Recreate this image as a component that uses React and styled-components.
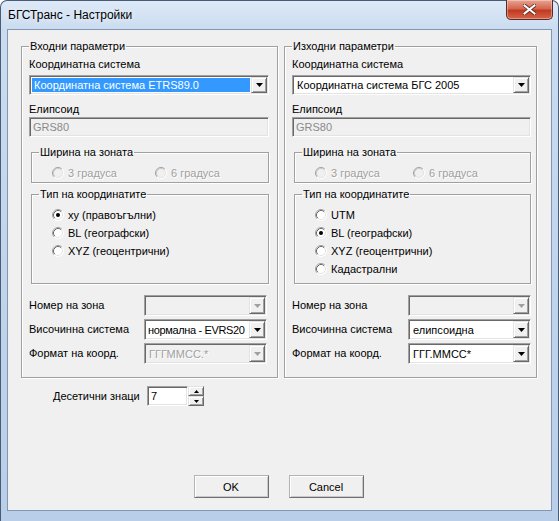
import React from "react";
import styled, { createGlobalStyle } from "styled-components";

const GlobalStyle = createGlobalStyle`
  body {
    margin: 0;
    background: #ffffff;
    font-family: "Liberation Sans", Arial, sans-serif;
  }
`;

// window frame
const Window = styled.div`
  width: 559px;
  height: 521px;
  box-sizing: border-box;
  border: 1px solid #4a5c73;
  border-bottom: none;
  border-radius: 7px 7px 0 0;
  background: linear-gradient(to bottom, #dde9f7 0, #cbdcf0 28px, #bfd3eb 60%, #b9cee8 100%);
  padding: 0 6px 10px 6px;
  display: flex;
  flex-direction: column;
`;

const TitleBar = styled.div`
  height: 28px;
  display: flex;
  align-items: flex-start;
  justify-content: space-between;
`;

const Title = styled.div`
  font-size: 12px;
  color: #000;
  margin: 7px 0 0 1px;
  text-shadow: 0 0 6px rgba(255, 255, 255, 0.9);
`;

const CloseButton = styled.div`
  width: 47px;
  height: 20px;
  margin: -1px -1px 0 0;
  box-sizing: border-box;
  border: 1px solid #5b2a24;
  border-top: none;
  border-radius: 0 0 5px 5px;
  background: linear-gradient(to bottom, #e8a493 0, #d5664f 45%, #c03a21 55%, #d6644a 100%);
  box-shadow: inset 0 0 0 1px rgba(255, 255, 255, 0.35);
  display: flex;
  align-items: center;
  justify-content: center;
`;

const Client = styled.div`
  flex: 1;
  background: #f0f0f0;
  border: 1px solid #8197b3;
  display: flex;
  flex-direction: column;
  font-size: 11px;
  color: #000;
`;

const Groups = styled.div`
  display: flex;
  gap: 6px;
  padding: 10px 0 0 13px;
`;

const Group = styled.fieldset`
  box-sizing: border-box;
  width: ${(p) => p.$w}px;
  height: 338px;
  margin: 0;
  padding: 0 ${(p) => p.$pr}px 0 7px;
  border: 1px solid #a0a0a0;
  box-shadow: 1px 1px 0 #fff, inset 1px 1px 0 #fff;
  display: flex;
  flex-direction: column;
  min-width: 0;
`;

const Legend = styled.legend`
  padding: 0 1px;
  line-height: 13px;
  font-size: 11px;
`;

const Label = styled.div`
  line-height: 13px;
  margin-top: ${(p) => p.$mt || 0}px;
  white-space: nowrap;
`;

const ComboBox = styled.div`
  box-sizing: border-box;
  height: ${(p) => p.$h || 20}px;
  margin-top: ${(p) => p.$mt || 0}px;
  display: flex;
  padding: 1px;
  border: 1px solid;
  border-color: #a0a0a0 #fff #fff #a0a0a0;
  box-shadow: inset 1px 1px 0 #696969, inset -1px -1px 0 #e3e3e3;
  background: ${(p) => (p.$disabled ? "#f0f0f0" : "#fff")};
`;

const ComboText = styled.div`
  flex: 1;
  min-width: 0;
  margin: 1px;
  padding-left: ${(p) => (p.$tight ? 1 : 2)}px;
  display: flex;
  align-items: center;
  white-space: nowrap;
  overflow: hidden;
  letter-spacing: ${(p) => (p.$tight ? "-0.35px" : "normal")};
  background: ${(p) => (p.$selected ? "#3399ff" : "transparent")};
  color: ${(p) => (p.$selected ? "#fff" : p.$disabled ? "#a0a0a0" : "#000")};
  text-shadow: ${(p) => (p.$disabled ? "1px 1px 0 #fff" : "none")};
`;

const DropButton = styled.div`
  box-sizing: border-box;
  width: 16px;
  flex-shrink: 0;
  background: #f0f0f0;
  border: 1px solid;
  border-color: #e3e3e3 #696969 #696969 #e3e3e3;
  box-shadow: inset 1px 1px 0 #fff, inset -1px -1px 0 #a0a0a0;
  display: flex;
  align-items: center;
  justify-content: center;
`;

const Edit = styled.div`
  box-sizing: border-box;
  height: 20px;
  margin-top: ${(p) => p.$mt || 0}px;
  padding-left: 3px;
  display: flex;
  align-items: center;
  border: 1px solid;
  border-color: #a0a0a0 #fff #fff #a0a0a0;
  box-shadow: inset 1px 1px 0 #696969, inset -1px -1px 0 #e3e3e3;
  background: ${(p) => (p.$disabled ? "#f0f0f0" : "#fff")};
  color: ${(p) => (p.$disabled ? "#8a8a8a" : "#000")};
`;

const SubGroup = styled.fieldset`
  box-sizing: border-box;
  height: ${(p) => p.$h}px;
  margin: ${(p) => p.$mt}px 0 0 2px;
  padding: 0 0 0 7px;
  border: 1px solid #a0a0a0;
  box-shadow: 1px 1px 0 #fff, inset 1px 1px 0 #fff;
  min-width: 0;
`;

const RadioLine = styled.div`
  display: flex;
  margin: 5px 0 0 13px;
`;

const RadioList = styled.div`
  display: flex;
  flex-direction: column;
  margin: 5px 0 0 13px;
`;

const RadioItem = styled.div`
  display: flex;
  align-items: center;
  height: 18px;
  width: ${(p) => (p.$w ? `${p.$w}px` : "auto")};
  gap: 4px;
  color: ${(p) => (p.$disabled ? "#a0a0a0" : "#000")};
  text-shadow: ${(p) => (p.$disabled ? "1px 1px 0 #fff" : "none")};
  white-space: nowrap;
`;

const FieldRows = styled.div`
  display: grid;
  grid-template-columns: ${(p) => p.$labelW}px 123px;
  row-gap: 3px;
  margin-top: 11px;
  align-items: center;
`;

const DecimalRow = styled.div`
  display: grid;
  grid-template-columns: 94px 41px 16px;
  align-items: center;
  margin: 8px 0 0 45px;
`;

const SpinButtons = styled.div`
  display: flex;
  flex-direction: column;
  height: 20px;
`;

const SpinButton = styled.div`
  box-sizing: border-box;
  height: 10px;
  background: #f0f0f0;
  border: 1px solid;
  border-color: #e3e3e3 #696969 #696969 #e3e3e3;
  box-shadow: inset 1px 1px 0 #fff, inset -1px -1px 0 #a0a0a0;
  display: flex;
  align-items: center;
  justify-content: center;
`;

const Buttons = styled.div`
  margin-top: auto;
  padding-bottom: 12px;
  display: flex;
  justify-content: center;
  gap: 20px;
  padding-right: 2px;
`;

const PushButton = styled.div`
  box-sizing: border-box;
  width: 75px;
  height: 23px;
  background: #f0f0f0;
  border: 1px solid;
  border-color: #b4b4b4 #707070 #707070 #b4b4b4;
  box-shadow: inset 1px 1px 0 #fff, inset -1px -1px 0 #c8c8c8;
  display: flex;
  align-items: center;
  justify-content: center;
`;

const Arrow = ({ disabled }) => (
  <svg width="7" height="4" viewBox="0 0 7 4">
    <polygon points="0,0 7,0 3.5,4" fill={disabled ? "#a0a0a0" : "#000"} />
  </svg>
);

const SmallArrow = ({ up }) => (
  <svg width="5" height="3" viewBox="0 0 5 3">
    <polygon points={up ? "0,3 5,3 2.5,0" : "0,0 5,0 2.5,3"} fill="#000" />
  </svg>
);

const RadioMark = ({ checked, disabled }) => (
  <svg width="12" height="12" viewBox="0 0 12 12">
    <circle cx="6" cy="6" r="5.5" fill={disabled ? "#f0f0f0" : "#fff"} />
    <path d="M2.11 9.89 A5.5 5.5 0 0 1 9.89 2.11" fill="none" stroke="#a0a0a0" />
    <path d="M9.89 2.11 A5.5 5.5 0 0 1 2.11 9.89" fill="none" stroke="#fff" />
    <path d="M2.82 9.18 A4.5 4.5 0 0 1 9.18 2.82" fill="none" stroke={disabled ? "#c8c8c8" : "#696969"} />
    <path d="M9.18 2.82 A4.5 4.5 0 0 1 2.82 9.18" fill="none" stroke="#e3e3e3" />
    {checked && <circle cx="6" cy="6" r="2" fill="#000" />}
  </svg>
);

const Radio = ({ label, checked, disabled, w }) => (
  <RadioItem $disabled={disabled} $w={w}>
    <RadioMark checked={checked} disabled={disabled} />
    <span>{label}</span>
  </RadioItem>
);

const Combo = ({ value, selected, disabled, tight, h, mt }) => (
  <ComboBox $disabled={disabled} $h={h} $mt={mt}>
    <ComboText $selected={selected} $disabled={disabled} $tight={tight}>
      {value}
    </ComboText>
    <DropButton>
      <Arrow disabled={disabled} />
    </DropButton>
  </ComboBox>
);

const ParamGroup = ({ title, w, pr, labelW, system, selected, radios, height, tightHeight, format, formatDisabled }) => (
  <Group $w={w} $pr={pr}>
    <Legend>{title}</Legend>
    <Label $mt={5}>Координатна система</Label>
    <Combo value={system} selected={selected} mt={4} />
    <Label $mt={8}>Елипсоид</Label>
    <Edit $disabled $mt={1}>GRS80</Edit>
    <SubGroup $h={37} $mt={9}>
      <Legend>Ширина на зоната</Legend>
      <RadioLine>
        <Radio label="3 градуса" disabled w={w > 255 ? 103 : 98} />
        <Radio label="6 градуса" disabled />
      </RadioLine>
    </SubGroup>
    <SubGroup $h={96} $mt={5}>
      <Legend>Тип на координатите</Legend>
      <RadioList>
        {radios.map((r) => (
          <Radio key={r.label} label={r.label} checked={r.checked} />
        ))}
      </RadioList>
    </SubGroup>
    <FieldRows $labelW={labelW}>
      <Label>Номер на зона</Label>
      <Combo value="" disabled h={21} />
      <Label>Височинна система</Label>
      <Combo value={height} tight={tightHeight} h={21} />
      <Label>Формат на коорд.</Label>
      <Combo value={format} disabled={formatDisabled} h={21} />
    </FieldRows>
  </Group>
);

const CloseIcon = () => (
  <svg width="13" height="11" viewBox="0 0 13 11">
    <path
      d="M1.5 1.5 L11.5 9.5 M11.5 1.5 L1.5 9.5"
      stroke="#5a2a22"
      strokeWidth="3.6"
      strokeLinecap="square"
    />
    <path
      d="M1.5 1.5 L11.5 9.5 M11.5 1.5 L1.5 9.5"
      stroke="#ffffff"
      strokeWidth="2"
      strokeLinecap="square"
    />
  </svg>
);

const App = () => {
  return (
    <>
      <GlobalStyle />
      <Window>
        <TitleBar>
          <Title>БГСТранс - Настройки</Title>
          <CloseButton>
            <CloseIcon />
          </CloseButton>
        </TitleBar>
        <Client>
          <Groups>
            <ParamGroup
              title="Входни параметри"
              w={257}
              pr={8}
              labelW={115}
              system="Координатна система ETRS89.0"
              selected
              radios={[
                { label: "xy (правоъгълни)", checked: true },
                { label: "BL (географски)" },
                { label: "XYZ (геоцентрични)" },
              ]}
              height="нормална - EVRS20"
              tightHeight
              format="ГГГММСС.*"
              formatDisabled
            />
            <ParamGroup
              title="Изходни параметри"
              w={253}
              pr={5}
              labelW={116}
              system="Координатна система БГС 2005"
              radios={[
                { label: "UTM" },
                { label: "BL (географски)", checked: true },
                { label: "XYZ (геоцентрични)" },
                { label: "Кадастрални" },
              ]}
              height="елипсоидна"
              format="ГГГ.ММСС*"
            />
          </Groups>
          <DecimalRow>
            <Label>Десетични знаци</Label>
            <Edit>7</Edit>
            <SpinButtons>
              <SpinButton>
                <SmallArrow up />
              </SpinButton>
              <SpinButton>
                <SmallArrow />
              </SpinButton>
            </SpinButtons>
          </DecimalRow>
          <Buttons>
            <PushButton>OK</PushButton>
            <PushButton>Cancel</PushButton>
          </Buttons>
        </Client>
      </Window>
    </>
  );
};

export default App;
